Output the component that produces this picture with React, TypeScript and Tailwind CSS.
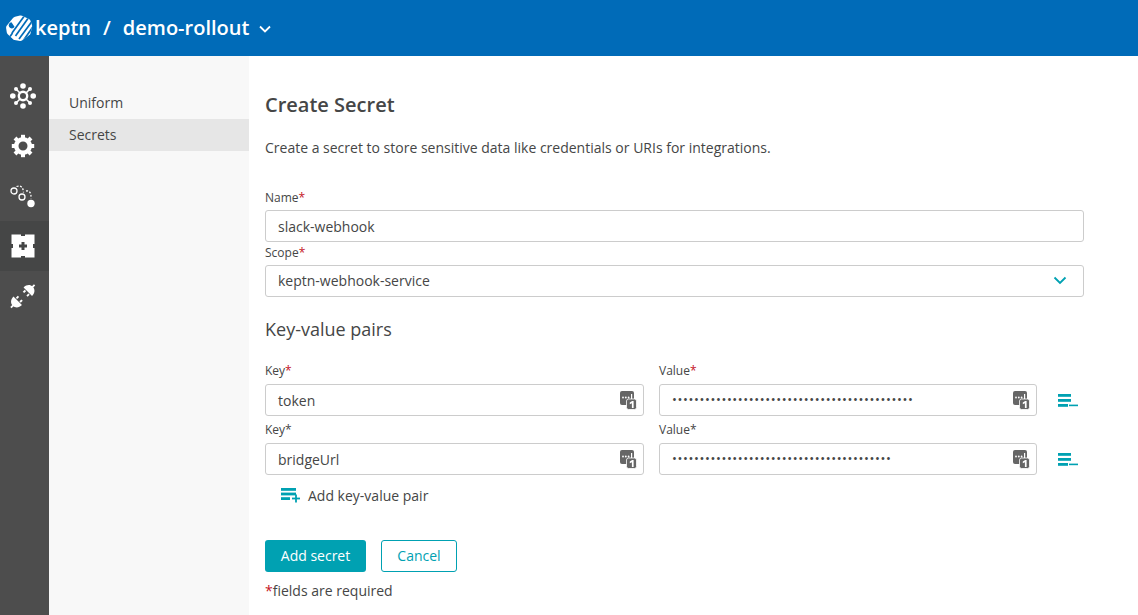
import React from "react";

const Req = () => <span className="text-[#c41425]">*</span>;

const Logo = () => (
  <svg width="28" height="28" viewBox="0 0 28 28" className="shrink-0">
    <defs>
      <clipPath id="lg">
        <path d="M1.5 12 L8 4 Q9 3 10 2.8 L15 1.6 Q16 1.4 17 1.8 L24 5 Q25 5.5 25.4 6.5 L27 11 Q27.3 12 27 13 L25.5 19.5 Q25.2 20.5 24.4 21 L17 26.6 Q16 27.2 15 27 L9.5 26 Q8.5 25.8 7.8 25 L3 20.5 Q2 19.5 1.8 18.5 L1.1 14 Q1 13 1.5 12 Z" />
      </clipPath>
    </defs>
    <g clipPath="url(#lg)">
      <rect width="28" height="28" fill="#fff" />
      <g stroke="#006bb8" strokeWidth="1.7">
        <path d="M7 19 L20 1" />
        <path d="M10.5 22 L24 3" />
        <path d="M14 25 L28 6" />
        <path d="M18 27 L30 10" />
        <path d="M4 24 L7.5 19" />
      </g>
      <path d="M6.5 8.2a3.1 3.1 0 1 0 3 4.6z" fill="#006bb8" />
    </g>
  </svg>
);

const EnvironmentIcon = () => (
  <svg width="26" height="26" viewBox="0 0 26 26" fill="#fff">
    <g stroke="#fff" strokeWidth="1.6">
      <path d="M6 6L20 20" />
      <path d="M20 6L6 20" />
    </g>
    <circle cx="13" cy="3" r="2.8" />
    <circle cx="13" cy="23" r="2.8" />
    <circle cx="2.8" cy="13" r="2.8" />
    <circle cx="23.2" cy="13" r="2.8" />
    <circle cx="6" cy="6" r="2" />
    <circle cx="20" cy="6" r="2" />
    <circle cx="6" cy="20" r="2" />
    <circle cx="20" cy="20" r="2" />
    <circle cx="13" cy="13" r="5.4" fill="#fff" />
    <circle cx="13" cy="13" r="3" fill="#4d4d4d" />
  </svg>
);

const GearIcon = () => (
  <svg width="24" height="24" viewBox="0 0 24 24">
    <circle cx="12" cy="12" r="6.75" fill="none" stroke="#fff" strokeWidth="4.5" />
    <g stroke="#fff" strokeWidth="4">
      <path d="M12 0.8V5" />
      <path d="M12 19V23.2" />
      <path d="M0.8 12H5" />
      <path d="M19 12H23.2" />
      <path d="M4 4L6.8 6.8" />
      <path d="M17.2 17.2L20 20" />
      <path d="M4 20L6.8 17.2" />
      <path d="M17.2 6.8L20 4" />
    </g>
  </svg>
);

const SequenceIcon = () => (
  <svg width="26" height="26" viewBox="0 0 26 26" fill="none" stroke="#fff" strokeWidth="1.3">
    <circle cx="4" cy="8" r="3" />
    <circle cx="12" cy="14" r="3" />
    <circle cx="21" cy="20.5" r="3.7" fill="#fff" stroke="none" />
    <path d="M6.5 3.5 Q13 1.5 13.5 9.5" strokeDasharray="2 1.5" />
    <path d="M16 8 Q21.5 7 21 15.5" strokeDasharray="2 1.5" />
  </svg>
);

const PuzzleIcon = () => (
  <svg width="24" height="24" viewBox="0 0 24 24">
    <path
      fill="#fff"
      fillRule="evenodd"
      d="M0.5 0.5H10V2H14V0.5H23.5V10H22V14H23.5V23.5H14V22H10V23.5H0.5V14H2V10H0.5Z M10.5 8V10.5H8V13.5H10.5V16H13.5V13.5H16V10.5H13.5V8Z"
    />
  </svg>
);

const Plug = ({ x, y, angle }: { x: number; y: number; angle: number }) => (
  <g transform={`translate(${x} ${y}) rotate(${angle})`}>
    <rect x="-0.9" y="-8.6" width="1.8" height="3.5" />
    <path d="M-6 1 C-6 -3.4 -3.4 -6 0 -6 C3.4 -6 6 -3.4 6 1Z" />
    <rect x="-3.5" y="1.8" width="1.9" height="2.8" />
    <rect x="1.6" y="1.8" width="1.9" height="2.8" />
  </g>
);

const PlugIcon = () => (
  <svg width="26" height="26" viewBox="0 0 26 26" fill="#fff">
    <Plug x={18.5} y={8} angle={45} />
    <Plug x={7} y={18.5} angle={225} />
  </svg>
);

const PasswordIcon = () => (
  <svg width="17" height="19" viewBox="0 0 17 19" className="shrink-0">
    <rect x="0" y="0" width="14" height="14" rx="2" fill="#666666" />
    <g fill="#fff">
      <circle cx="3" cy="6.5" r="0.9" />
      <circle cx="5.8" cy="6.5" r="0.9" />
      <circle cx="8.6" cy="6.5" r="0.9" />
      <rect x="11" y="3" width="1.2" height="5.5" />
    </g>
    <rect x="6.5" y="8" width="10" height="10.5" rx="2" fill="#666666" stroke="#fff" strokeWidth="0.8" />
    <path d="M9.8 11.4 L12.2 10 H13.6 V17 H11.9 V12.3 L9.8 13.3Z" fill="#fff" />
  </svg>
);

const RemoveIcon = () => (
  <svg width="20" height="13" viewBox="0 0 20 13" fill="#00a1b2">
    <rect x="0" y="0" width="13" height="2.8" />
    <rect x="0" y="5" width="13" height="2.8" />
    <rect x="0" y="10" width="10" height="2.8" />
    <rect x="11" y="10.6" width="9" height="1.6" />
  </svg>
);

const AddIcon = () => (
  <svg width="20" height="15" viewBox="0 0 20 15" fill="#00a1b2">
    <rect x="0" y="0" width="15" height="2.8" />
    <rect x="0" y="4.6" width="15" height="2.8" />
    <rect x="0" y="9.2" width="9" height="2.8" />
    <rect x="11" y="9.6" width="8" height="1.8" />
    <rect x="14.1" y="6.5" width="1.8" height="8" />
  </svg>
);

const Field = ({ value, secret }: { value: string; secret?: boolean }) => (
  <div className="flex h-8 items-center justify-between rounded-[3px] border border-[#cccccc] bg-white pl-3 pr-[6px]">
    {secret ? (
      <span className="text-[13px] tracking-[0.6px] text-[#454646]">{value}</span>
    ) : (
      <span className="text-[14px] text-[#454646]">{value}</span>
    )}
    <PasswordIcon />
  </div>
);

const Pair = ({
  keyValue,
  dots,
  red,
}: {
  keyValue: string;
  dots: number;
  red?: boolean;
}) => (
  <div className="flex items-end">
    <div className="w-[379px]">
      <label className="block h-[22px] text-[12px] leading-[18px] text-[#454646]">
        Key{red ? <Req /> : "*"}
      </label>
      <Field value={keyValue} />
    </div>
    <div className="ml-[15px] w-[378px]">
      <label className="block h-[22px] text-[12px] leading-[18px] text-[#454646]">
        Value{red ? <Req /> : "*"}
      </label>
      <Field value={"•".repeat(dots)} secret />
    </div>
    <div className="ml-[21px] flex h-8 items-center">
      <RemoveIcon />
    </div>
  </div>
);

export default function App() {
  return (
    <div
      className="flex h-[615px] w-[1138px] flex-col overflow-hidden bg-white text-[#454646]"
      style={{ fontFamily: '"Open Sans", sans-serif' }}
    >
      <header className="flex h-14 shrink-0 items-center bg-[#006bb8] pl-[5px] text-white">
        <Logo />
        <span className="ml-[2px] text-[20px] font-semibold">keptn</span>
        <span className="ml-[12px] text-[20px] font-semibold">/</span>
        <span className="ml-[12px] text-[20px] font-semibold">demo-rollout</span>
        <svg width="14" height="14" viewBox="0 0 14 14" fill="none" stroke="#fff" strokeWidth="1.8" className="ml-[9px] mt-[1px]">
          <path d="M2 4.5L7 9.5L12 4.5" />
        </svg>
      </header>
      <div className="flex min-h-0 flex-1">
        <nav className="flex w-[49px] shrink-0 flex-col bg-[#4d4d4d] pt-[15px]">
          <div className="flex h-[50px] items-center justify-center pr-[3px]"><EnvironmentIcon /></div>
          <div className="flex h-[50px] items-center justify-center pr-[3px]"><GearIcon /></div>
          <div className="flex h-[50px] items-center justify-center pr-[3px]"><SequenceIcon /></div>
          <div className="flex h-[50px] items-center justify-center bg-[#454646] pr-[3px]"><PuzzleIcon /></div>
          <div className="flex h-[50px] items-center justify-center pr-[3px]"><PlugIcon /></div>
        </nav>
        <aside className="w-[200px] shrink-0 bg-[#f8f8f8] pt-[31px] text-[14px]">
          <div className="flex h-8 items-center pb-[2px] pl-5">Uniform</div>
          <div className="flex h-8 items-center bg-[#e6e6e6] pb-[2px] pl-5">Secrets</div>
        </aside>
        <main className="min-w-0 flex-1 pl-4">
          <h1 className="mt-[35px] text-[20px] font-semibold leading-7">Create Secret</h1>
          <p className="mt-[19px] text-[14px] leading-5">
            Create a secret to store sensitive data like credentials or URIs for integrations.
          </p>
          <div className="w-[819px]">
            <label className="mt-[32px] block h-[20px] text-[12px] leading-[16px]">
              Name<Req />
            </label>
            <div className="flex h-8 items-center rounded-[3px] border border-[#cccccc] pl-3 text-[14px]">
              slack-webhook
            </div>
            <label className="mt-[3px] block h-[20px] text-[12px] leading-[16px]">
              Scope<Req />
            </label>
            <div className="flex h-8 items-center justify-between rounded-[3px] border border-[#cccccc] pb-[2px] pl-3 pr-[16px] text-[14px]">
              keptn-webhook-service
              <svg width="14" height="14" viewBox="0 0 14 14" fill="none" stroke="#00a1b2" strokeWidth="1.8">
                <path d="M1.5 4.5L7 10L12.5 4.5" />
              </svg>
            </div>
          </div>
          <h2 className="mt-[18px] text-[18px] leading-[28px]">Key-value pairs</h2>
          <div className="mt-[19px] flex flex-col gap-[5px]">
            <Pair keyValue="token" dots={44} red />
            <Pair keyValue="bridgeUrl" dots={40} />
          </div>
          <div className="ml-[16px] mt-[8px] flex h-6 items-center gap-[7px] text-[14px]">
            <AddIcon />
            Add key-value pair
          </div>
          <div className="mt-[33px] flex gap-[15px] text-[14px]">
            <button className="h-8 w-[101px] rounded-[3px] bg-[#00a1b2] pb-[2px] text-white">Add secret</button>
            <button className="h-8 w-[76px] rounded-[3px] border border-[#00a1b2] bg-white pb-[2px] text-[#00a1b2]">Cancel</button>
          </div>
          <p className="mt-[9px] text-[14px] leading-5">
            <Req />fields are required
          </p>
        </main>
      </div>
    </div>
  );
}
